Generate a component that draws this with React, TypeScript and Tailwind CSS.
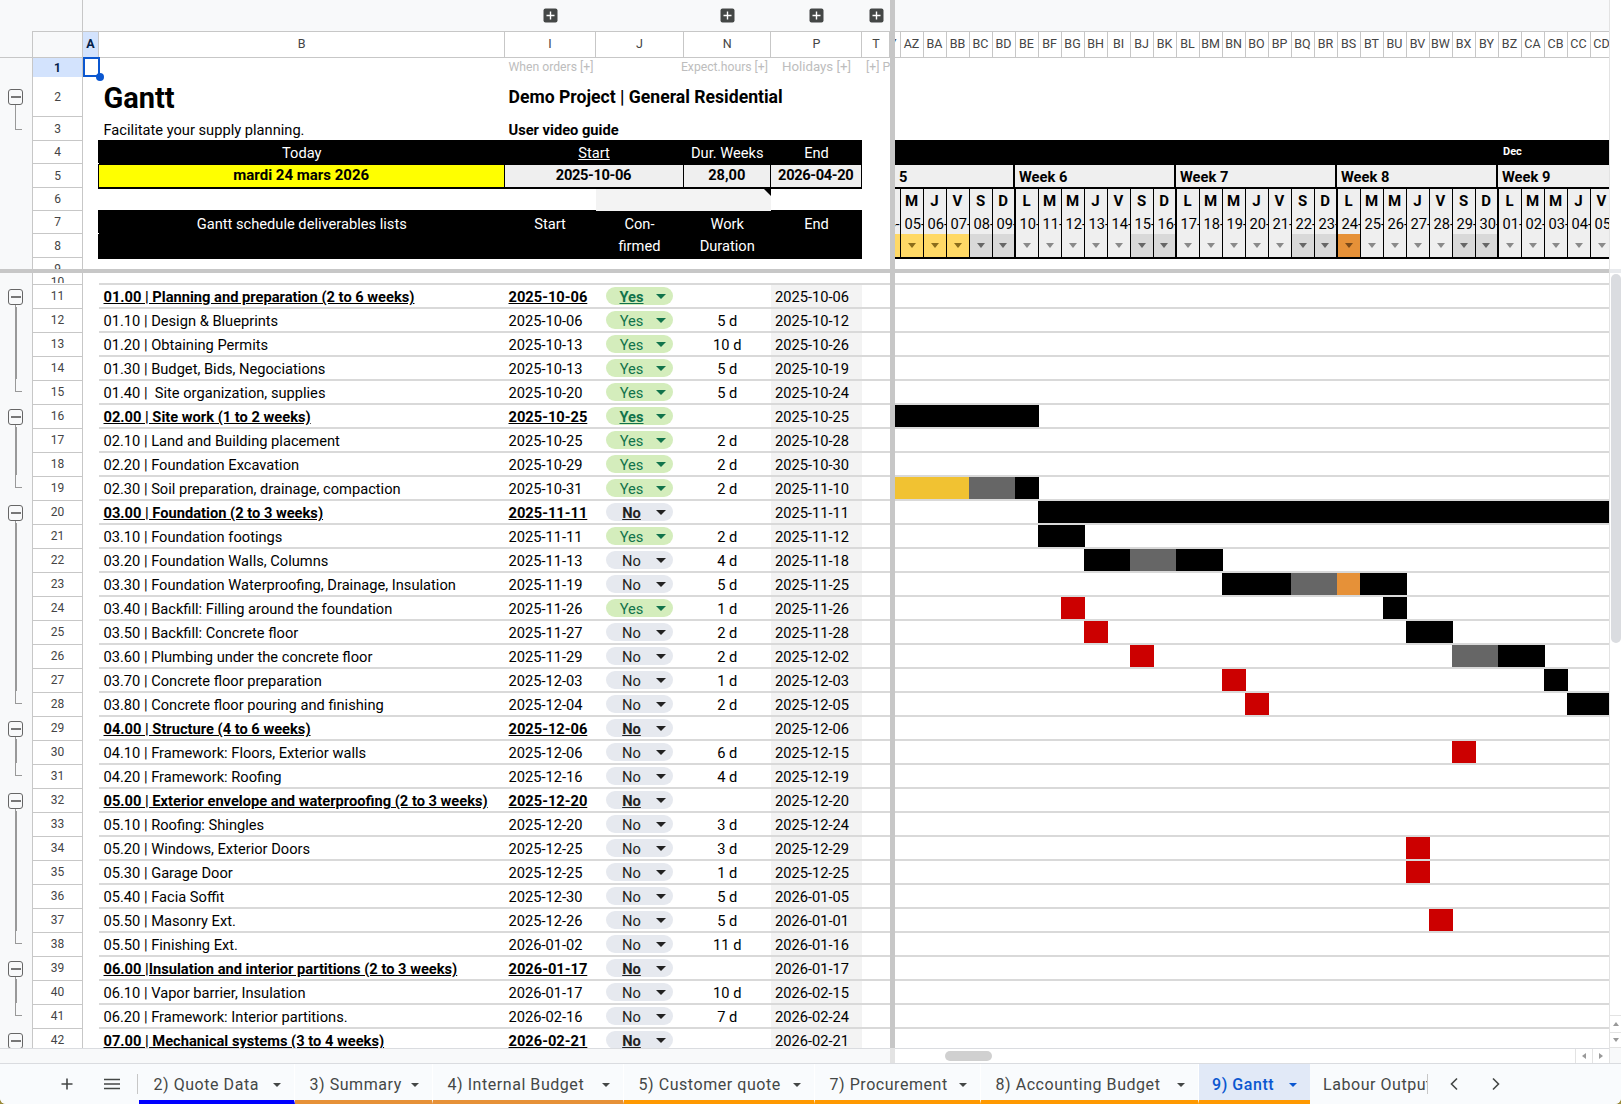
import React from "react";

type Row = { n: number; t: string; s: string; c: "Yes" | "No"; d: string; e: string; h?: boolean };

const rows: Row[] = [
  { n: 11, h: true, t: "01.00 | Planning and preparation (2 to 6 weeks)", s: "2025-10-06", c: "Yes", d: "", e: "2025-10-06" },
  { n: 12, t: "01.10 | Design & Blueprints", s: "2025-10-06", c: "Yes", d: "5 d", e: "2025-10-12" },
  { n: 13, t: "01.20 | Obtaining Permits", s: "2025-10-13", c: "Yes", d: "10 d", e: "2025-10-26" },
  { n: 14, t: "01.30 | Budget, Bids, Negociations", s: "2025-10-13", c: "Yes", d: "5 d", e: "2025-10-19" },
  { n: 15, t: "01.40 |  Site organization, supplies", s: "2025-10-20", c: "Yes", d: "5 d", e: "2025-10-24" },
  { n: 16, h: true, t: "02.00 | Site work (1 to 2 weeks)", s: "2025-10-25", c: "Yes", d: "", e: "2025-10-25" },
  { n: 17, t: "02.10 | Land and Building placement", s: "2025-10-25", c: "Yes", d: "2 d", e: "2025-10-28" },
  { n: 18, t: "02.20 | Foundation Excavation", s: "2025-10-29", c: "Yes", d: "2 d", e: "2025-10-30" },
  { n: 19, t: "02.30 | Soil preparation, drainage, compaction", s: "2025-10-31", c: "Yes", d: "2 d", e: "2025-11-10" },
  { n: 20, h: true, t: "03.00 | Foundation (2 to 3 weeks)", s: "2025-11-11", c: "No", d: "", e: "2025-11-11" },
  { n: 21, t: "03.10 | Foundation footings", s: "2025-11-11", c: "Yes", d: "2 d", e: "2025-11-12" },
  { n: 22, t: "03.20 | Foundation Walls, Columns", s: "2025-11-13", c: "No", d: "4 d", e: "2025-11-18" },
  { n: 23, t: "03.30 | Foundation Waterproofing, Drainage, Insulation", s: "2025-11-19", c: "No", d: "5 d", e: "2025-11-25" },
  { n: 24, t: "03.40 | Backfill: Filling around the foundation", s: "2025-11-26", c: "Yes", d: "1 d", e: "2025-11-26" },
  { n: 25, t: "03.50 | Backfill: Concrete floor", s: "2025-11-27", c: "No", d: "2 d", e: "2025-11-28" },
  { n: 26, t: "03.60 | Plumbing under the concrete floor", s: "2025-11-29", c: "No", d: "2 d", e: "2025-12-02" },
  { n: 27, t: "03.70 | Concrete floor preparation", s: "2025-12-03", c: "No", d: "1 d", e: "2025-12-03" },
  { n: 28, t: "03.80 | Concrete floor pouring and finishing", s: "2025-12-04", c: "No", d: "2 d", e: "2025-12-05" },
  { n: 29, h: true, t: "04.00 | Structure (4 to 6 weeks)", s: "2025-12-06", c: "No", d: "", e: "2025-12-06" },
  { n: 30, t: "04.10 | Framework: Floors, Exterior walls", s: "2025-12-06", c: "No", d: "6 d", e: "2025-12-15" },
  { n: 31, t: "04.20 | Framework: Roofing", s: "2025-12-16", c: "No", d: "4 d", e: "2025-12-19" },
  { n: 32, h: true, t: "05.00 | Exterior envelope and waterproofing (2 to 3 weeks)", s: "2025-12-20", c: "No", d: "", e: "2025-12-20" },
  { n: 33, t: "05.10 | Roofing: Shingles", s: "2025-12-20", c: "No", d: "3 d", e: "2025-12-24" },
  { n: 34, t: "05.20 | Windows, Exterior Doors", s: "2025-12-25", c: "No", d: "3 d", e: "2025-12-29" },
  { n: 35, t: "05.30 | Garage Door", s: "2025-12-25", c: "No", d: "1 d", e: "2025-12-25" },
  { n: 36, t: "05.40 | Facia Soffit", s: "2025-12-30", c: "No", d: "5 d", e: "2026-01-05" },
  { n: 37, t: "05.50 | Masonry Ext.", s: "2025-12-26", c: "No", d: "5 d", e: "2026-01-01" },
  { n: 38, t: "05.50 | Finishing Ext.", s: "2026-01-02", c: "No", d: "11 d", e: "2026-01-16" },
  { n: 39, h: true, t: "06.00 |Insulation and interior partitions (2 to 3 weeks)", s: "2026-01-17", c: "No", d: "", e: "2026-01-17" },
  { n: 40, t: "06.10 | Vapor barrier, Insulation", s: "2026-01-17", c: "No", d: "10 d", e: "2026-02-15" },
  { n: 41, t: "06.20 | Framework: Interior partitions.", s: "2026-02-16", c: "No", d: "7 d", e: "2026-02-24" },
  { n: 42, h: true, t: "07.00 | Mechanical systems (3 to 4 weeks)", s: "2026-02-21", c: "No", d: "", e: "2026-02-21" },
];

const K = "#000000";
const G = "#666666";
const R = "#cc0000";
const Y = "#f1c232";
const O = "#e69138";
// [start x, end x, colour] in page pixels
const bars: Record<number, [number, number, string][]> = {
  16: [[895, 1039, K]],
  19: [[895, 969, Y], [969, 1015, G], [1015, 1039, K]],
  20: [[1038, 1609, K]],
  21: [[1038, 1085, K]],
  22: [[1084, 1130, K], [1130, 1176, G], [1176, 1223, K]],
  23: [[1222, 1291, K], [1291, 1337, G], [1337, 1360, O], [1360, 1407, K]],
  24: [[1061, 1085, R], [1383, 1407, K]],
  25: [[1084, 1108, R], [1406, 1453, K]],
  26: [[1130, 1154, R], [1452, 1498, G], [1498, 1545, K]],
  27: [[1222, 1246, R], [1544, 1568, K]],
  28: [[1245, 1269, R], [1567, 1609, K]],
  30: [[1452, 1476, R]],
  34: [[1406, 1430, R]],
  35: [[1406, 1430, R]],
  37: [[1429, 1453, R]],
};

const colLabels = ["AZ","BA","BB","BC","BD","BE","BF","BG","BH","BI","BJ","BK","BL","BM","BN","BO","BP","BQ","BR","BS","BT","BU","BV","BW","BX","BY","BZ","CA","CB","CC","CD"];
const days = ["M","J","V","S","D","L","M","M","J","V","S","D","L","M","M","J","V","S","D","L","M","M","J","V","S","D","L","M","M","J","V"];
const dates = ["05","06","07","08","09","10","11","12","13","14","15","16","17","18","19","20","21","22","23","24","25","26","27","28","29","30","01","02","03","04","05"];

const groupStart = new Set([2, 11, 16, 20, 29, 32, 39, 42]);
const groupEnd = new Set([3, 15, 19, 28, 31, 38, 41]);
const groupMid = new Set([12, 13, 14, 17, 18, 21, 22, 23, 24, 25, 26, 27, 30, 33, 34, 35, 36, 37, 40]);

function Outline({ n }: { n: number }) {
  let inner: React.ReactNode = null;
  if (groupStart.has(n)) {
    inner = (
      <div className={`ml-[8px] flex h-full w-[15px] flex-col items-center ${n === 2 ? "pt-[12px]" : "pt-[6px]"}`}>
        <div className="flex h-[16px] w-[15px] shrink-0 items-center justify-center rounded-[3px] border border-[#666666] bg-[#f8f9fa]">
          <div className="h-[1.5px] w-[10px] bg-[#777777]" />
        </div>
        <div className="w-[1.5px] flex-1 bg-[#999999]" />
      </div>
    );
  } else if (groupEnd.has(n)) {
    inner = <div className="ml-[15px] h-[56%] w-[7px] border-b-[1.5px] border-l-[1.5px] border-[#999999]" />;
  } else if (groupMid.has(n)) {
    inner = <div className="ml-[15px] h-full w-[1.5px] bg-[#999999]" />;
  }
  return <div className="h-full w-[32px] shrink-0 bg-[#f8f9fa]">{inner}</div>;
}

function RowHead({ n }: { n: number }) {
  return (
    <div className="h-full w-[51px] shrink-0 border-l border-r border-[#c7c7c7] bg-white">
      <div className="flex h-full items-center justify-center overflow-hidden border-b border-[#c7c7c7] text-[12px] leading-none text-[#444444]">{n}</div>
    </div>
  );
}

function Tri({ cls }: { cls: string }) {
  return <div className={`h-0 w-0 border-x-[5px] border-t-[5px] border-x-transparent ${cls}`} />;
}

function TabTri({ cls }: { cls: string }) {
  return <div className={`h-0 w-0 border-x-[4px] border-t-[4px] border-x-transparent ${cls}`} />;
}

function Plus() {
  return (
    <svg width="15" height="15" viewBox="0 0 15 15">
      <rect x="0.5" y="0.5" width="14" height="14" rx="2" fill="#444746" />
      <path d="M7.5 3.5v8M3.5 7.5h8" stroke="#ffffff" strokeWidth="1.4" fill="none" />
    </svg>
  );
}

function DataRowLeft({ r }: { r: Row }) {
  const yes = r.c === "Yes";
  const style = r.h ? "font-bold underline" : "";
  return (
    <div className="flex h-[24px] shrink-0">
      <Outline n={r.n} />
      <div className="h-full w-[51px] shrink-0 border-l border-r border-[#c7c7c7] bg-white pt-px">
        <div className="flex h-full items-center justify-center border-t border-[#c7c7c7] pb-px text-[12px] leading-none text-[#444444]">{r.n}</div>
      </div>
      <div className="h-full w-[16px] shrink-0 bg-white" />
      <div className="flex h-full w-[791px] shrink-0 border-t-2 border-[#d9d9d9] text-[14.67px] leading-none text-black">
        <div className={`flex w-[405.5px] items-center overflow-hidden pl-[4.5px] pt-[3px] whitespace-pre ${style}`}>{r.t}</div>
        <div className={`flex w-[91px] items-center pl-[4px] pt-[3px] ${style}`}>{r.s}</div>
        <div className="flex w-[88px] items-center pl-[10.5px]">
          <div className={`flex h-[18px] w-[67px] items-center rounded-full pr-[7px] ${yes ? "bg-[#d4edbc] text-[#11734b]" : "bg-[#e6e9ef] text-[#222222]"} ${style}`}>
            <span className="flex-1 pl-[1px] pt-[3px] text-center">{r.c}</span>
            <Tri cls={yes ? "border-t-[#11734b]" : "border-t-[#222222]"} />
          </div>
        </div>
        <div className="flex w-[87.5px] items-center justify-center pt-[3px]">{r.d}</div>
        <div className="flex w-[91px] items-center bg-[#f3f3f3] pl-[4px] pt-[3px]">{r.e}</div>
        <div className="w-[28px]" />
      </div>
    </div>
  );
}

function DataRowRight({ r }: { r: Row }) {
  let x = 895;
  return (
    <div className="flex h-[24px] shrink-0 border-t-2 border-[#d9d9d9] bg-white">
      {(bars[r.n] || []).map(([a, b, c], i) => {
        const start = Math.max(a, x);
        const margin = start - x;
        x = b;
        return <div key={i} className="h-full shrink-0" style={{ marginLeft: margin, width: b - start, backgroundColor: c }} />;
      })}
    </div>
  );
}

const tabs: { t: string; w: string; b: string }[] = [
  { t: "2) Quote Data", w: "w-[156px]", b: "border-b-[#0000ff]" },
  { t: "3) Summary", w: "w-[138px]", b: "border-b-[#e69138]" },
  { t: "4) Internal Budget", w: "w-[191px]", b: "border-b-[#e69138]" },
  { t: "5) Customer quote", w: "w-[191px]", b: "border-b-[#ff9900]" },
  { t: "7) Procurement", w: "w-[166px]", b: "border-b-[#ff9900]" },
  { t: "8) Accounting Budget", w: "w-[218px]", b: "border-b-[#ff9900]" },
];

export default function App() {
  return (
    <div className="h-[1104px] w-[1621px] overflow-hidden bg-[#9a8a3a]">
      <div className="flex h-[1104px] w-[1621px] flex-col overflow-hidden rounded-b-[6px] bg-white font-['Roboto',sans-serif]">
        <div className="flex h-[1063px] shrink-0">
          {/* Frozen pane */}
          <div className="flex w-[890px] shrink-0 flex-col">
            <div className="flex h-[1048px] shrink-0 flex-col overflow-hidden">
              {/* Group toggle bar */}
              <div className="flex h-[31px] shrink-0 bg-[#f8f9fa]">
                <div className="w-[83px] shrink-0 border-r border-[#c7c7c7]" />
                <div className="w-[421.5px]" />
                <div className="flex w-[91px] items-center justify-center"><Plus /></div>
                <div className="w-[88px]" />
                <div className="flex w-[87.5px] items-center justify-center"><Plus /></div>
                <div className="flex w-[91px] items-center justify-center"><Plus /></div>
                <div className="flex w-[28px] items-center justify-center"><Plus /></div>
              </div>
              {/* Column letters */}
              <div className="flex h-[27px] shrink-0 border-b border-[#c7c7c7] bg-[#f8f9fa] text-[12.5px] text-[#444444]">
                <div className="w-[32px] shrink-0" />
                <div className="h-full w-[51px] shrink-0 border-l border-r border-t border-[#c7c7c7]" />
                <div className="flex w-[16px] items-center justify-center border-t border-r border-[#c7c7c7] bg-[#d3e3fd] font-bold text-[#041e49]">A</div>
                {[["B", "w-[405.5px]"], ["I", "w-[91px]"], ["J", "w-[88px]"], ["N", "w-[87.5px]"], ["P", "w-[91px]"], ["T", "w-[28px]"]].map(([l, w]) => (
                  <div key={l} className={`flex items-center justify-center border-t border-r border-[#c7c7c7] bg-white pl-px ${w}`}>{l}</div>
                ))}
              </div>
              {/* Row 1 */}
              <div className="flex h-[19px] shrink-0">
                <Outline n={1} />
                <div className="flex h-full w-[51px] shrink-0 items-center justify-center border-l border-r border-[#c7c7c7] bg-[#d3e3fd] text-[12px] font-bold text-[#041e49]">1</div>
                <div className="relative -mt-px h-[20px] w-[17px] shrink-0 border-2 border-[#0b57d0]">
                  <div className="absolute -bottom-[6px] -right-[6px] h-[8px] w-[8px] rounded-full bg-[#0b57d0]" />
                </div>
                <div className="flex h-full -ml-px text-[12.2px] leading-[18px] text-[#bdbdbd]">
                  <div className="w-[405.5px]" />
                  <div className="w-[91px] pl-[4px] whitespace-nowrap">When orders [+]</div>
                  <div className="w-[88px]" />
                  <div className="flex w-[87.5px] justify-end pr-[3px] whitespace-nowrap">Expect.hours [+]</div>
                  <div className="w-[91px] text-center text-[13.3px] whitespace-nowrap">Holidays [+]</div>
                  <div className="w-[28px] overflow-hidden pl-[4px] whitespace-nowrap">[+] Phase</div>
                </div>
              </div>
              {/* Row 2 */}
              <div className="flex h-[40px] shrink-0">
                <Outline n={2} />
                <RowHead n={2} />
                <div className="w-[16px] shrink-0" />
                <div className="flex w-[405.5px] items-center pl-[4.5px] pt-[3px] text-[29px] font-bold leading-none text-black">Gantt</div>
                <div className="flex items-center pl-[4px] pt-[2px] text-[17.6px] font-bold leading-none text-black whitespace-nowrap">Demo Project | General Residential</div>
              </div>
              {/* Row 3 */}
              <div className="flex h-[24px] shrink-0">
                <Outline n={3} />
                <RowHead n={3} />
                <div className="w-[16px] shrink-0" />
                <div className="flex w-[405.5px] items-center pl-[4.5px] pt-[3px] text-[14.67px] leading-none text-black">Facilitate your supply planning.</div>
                <div className="flex items-center pl-[4px] pt-[3px] text-[14.67px] font-bold leading-none text-black">User video guide</div>
              </div>
              {/* Row 4 */}
              <div className="flex h-[23px] shrink-0">
                <Outline n={4} />
                <RowHead n={4} />
                <div className="w-[16px] shrink-0" />
                <div className="flex w-[763px] bg-black pt-[2px] text-[14.67px] leading-none text-white shadow-[-1px_-1px_0_#000,0_-1px_0_#000,0_1px_0_#000]">
                  <div className="flex w-[405.5px] items-center justify-center">Today</div>
                  <div className="flex w-[179px] items-center justify-center underline">Start</div>
                  <div className="flex w-[87.5px] items-center justify-center whitespace-nowrap">Dur. Weeks</div>
                  <div className="flex w-[91px] items-center justify-center">End</div>
                </div>
              </div>
              {/* Row 5 */}
              <div className="flex h-[24px] shrink-0">
                <Outline n={5} />
                <RowHead n={5} />
                <div className="w-[16px] shrink-0" />
                <div className="flex h-[25px] w-[763px] gap-px bg-black pt-px pb-[2px] pr-[1.5px] text-[14.67px] font-bold leading-none text-black shadow-[-1px_0_0_#000]">
                  <div className="flex w-[404.5px] items-center justify-center bg-[#ffff00] pb-[2px] text-[15px]">mardi 24 mars 2026</div>
                  <div className="flex w-[178px] items-center justify-center bg-[#efefef] pb-[2px] tracking-[-0.35px]">2025-10-06</div>
                  <div className="flex w-[86.5px] items-center justify-center bg-[#efefef] pb-[2px]">28,00</div>
                  <div className="flex flex-1 items-center justify-center bg-[#efefef] pb-[2px] tracking-[-0.35px]">2026-04-20</div>
                </div>
              </div>
              {/* Row 6 */}
              <div className="flex h-[23px] shrink-0">
                <Outline n={6} />
                <RowHead n={6} />
                <div className="w-[16px] shrink-0" />
                <div className="w-[496.5px]" />
                <div className="relative mt-px h-[22px] w-[175.5px] bg-[#f3f3f3]">
                  <div className="absolute right-0 top-0 h-0 w-0 border-l-[7px] border-t-[7px] border-l-transparent border-t-black" />
                </div>
              </div>
              {/* Row 7 */}
              <div className="flex h-[23px] shrink-0">
                <Outline n={7} />
                <RowHead n={7} />
                <div className="w-[16px] shrink-0" />
                <div className="flex w-[763px] bg-black pt-[3px] text-[14.67px] leading-none text-white shadow-[-1px_-1px_0_#000,0_-1px_0_#000]">
                  <div className="flex w-[405.5px] items-center justify-center">Gantt schedule deliverables lists</div>
                  <div className="flex w-[91px] items-center justify-center">Start</div>
                  <div className="flex w-[88px] items-center justify-center">Con-</div>
                  <div className="flex w-[87.5px] items-center justify-center">Work</div>
                  <div className="flex w-[91px] items-center justify-center">End</div>
                </div>
              </div>
              {/* Row 8 */}
              <div className="flex h-[24px] shrink-0">
                <Outline n={8} />
                <RowHead n={8} />
                <div className="w-[16px] shrink-0" />
                <div className="flex h-[24.5px] w-[763px] bg-black pt-px text-[14.67px] leading-none text-white shadow-[-1px_0_0_#000]">
                  <div className="w-[405.5px]" />
                  <div className="w-[91px]" />
                  <div className="flex w-[88px] items-center justify-center">firmed</div>
                  <div className="flex w-[87.5px] items-center justify-center">Duration</div>
                  <div className="w-[91px]" />
                </div>
              </div>
              {/* Row 9 */}
              <div className="flex h-[11px] shrink-0">
                <Outline n={9} />
                <div className="h-full w-[51px] shrink-0 overflow-hidden border-l border-r border-[#c7c7c7] bg-white pt-[4px] text-center text-[12px] leading-[14px] text-[#444444]">9</div>
              </div>
              {/* Freeze bar */}
              <div className="h-[4px] shrink-0 bg-[#c7c7c7]" />
              {/* Row 10 */}
              <div className="flex h-[10px] shrink-0">
                <Outline n={10} />
                <div className="flex h-full w-[51px] shrink-0 items-start justify-center overflow-hidden border-l border-r border-[#c7c7c7] bg-white pt-[2px] text-[12px] leading-[14px] text-[#444444]">10</div>
              </div>
              {rows.map((r) => (
                <DataRowLeft key={r.n} r={r} />
              ))}
            </div>
            {/* Horizontal scroller, frozen side */}
            <div className="h-[15px] shrink-0 border-t border-[#dadce0] bg-[#f8f9fa]" />
          </div>

          {/* Vertical freeze bar */}
          <div className="flex w-[5px] shrink-0 flex-col">
            <div className="h-[1048px] shrink-0 bg-[#c7c7c7]" />
            <div className="flex-1 bg-[#e3e3e3]" />
          </div>

          {/* Scrolling pane */}
          <div className="flex w-[714px] shrink-0 flex-col">
            <div className="flex h-[1048px] shrink-0 flex-col overflow-hidden">
              <div className="h-[31px] shrink-0 bg-[#f8f9fa]" />
              <div className="flex h-[27px] shrink-0 overflow-hidden border-y border-[#c7c7c7] text-[12.5px] text-[#444444]">
                <div className="flex w-[5.5px] shrink-0 items-center justify-end overflow-hidden border-r border-[#c7c7c7] pr-[3px]">Y</div>
                {colLabels.map((c) => (
                  <div key={c} className="flex w-[23px] shrink-0 items-center justify-center border-r border-[#c7c7c7]">{c}</div>
                ))}
              </div>
              <div className="h-[82px] shrink-0" />
              {/* Month band */}
              <div className="flex h-[25px] shrink-0 bg-black">
                <div className="w-[608px] shrink-0" />
                <div className="w-[23px] overflow-hidden text-[11px] font-bold leading-[23px] text-white">Dec</div>
              </div>
              {/* Week band */}
              <div className="flex h-[24px] shrink-0 border-b-2 border-black bg-[#efefef] text-[14.67px] font-bold leading-[24px] text-black">
                <div className="w-[120px] shrink-0 border-r-2 border-black pl-[4px]">5</div>
                <div className="w-[161px] shrink-0 border-r-2 border-black pl-[4px]">Week 6</div>
                <div className="w-[161px] shrink-0 border-r-2 border-black pl-[4px]">Week 7</div>
                <div className="w-[161px] shrink-0 border-r-2 border-black pl-[4px]">Week 8</div>
                <div className="shrink-0 pl-[4px]">Week 9</div>
              </div>
              {/* Day columns */}
              <div className="flex h-[70px] shrink-0 border-b-2 border-black bg-[#efefef]">
                <div className="flex w-[5.5px] shrink-0 flex-col border-r border-black">
                  <div className="h-[23px] shrink-0" />
                  <div className="flex h-[22px] shrink-0 items-center justify-end overflow-hidden pt-[2px] text-[14.67px] leading-none">4-</div>
                  <div className="flex-1 bg-[#ffd966]" />
                </div>
                {days.map((d, i) => {
                  const weekend = d === "S" || d === "D";
                  const today = i === 19;
                  const past = i < 3;
                  return (
                    <div key={i} className={`flex w-[23px] shrink-0 flex-col border-black ${d === "D" ? "border-r-2" : "border-r"}`}>
                      <div className="flex h-[23px] shrink-0 items-center justify-center pt-[2px] text-[15px] font-bold leading-none text-black">{d}</div>
                      <div className="flex h-[22px] shrink-0 items-center overflow-hidden pl-[4px] pt-[2px] text-[14.67px] leading-none text-black whitespace-nowrap">{dates[i]}-11</div>
                      <div className={`flex flex-1 items-center justify-center ${today ? "bg-[#e69138]" : past ? "bg-[#ffd966]" : weekend ? "bg-[#d9d9d9]" : ""}`}>
                        <div className={`h-0 w-0 border-x-[4px] border-t-[5px] border-x-transparent ${today ? "border-t-[#7a4a1a]" : past ? "border-t-[#8a6d1b]" : weekend ? "border-t-[#666666]" : "border-t-[#8a8a8a]"}`} />
                      </div>
                    </div>
                  );
                })}
              </div>
              <div className="h-[10px] shrink-0" />
              <div className="h-[4px] shrink-0 bg-[#c7c7c7]" />
              <div className="h-[10px] shrink-0" />
              {rows.map((r) => (
                <DataRowRight key={r.n} r={r} />
              ))}
            </div>
            {/* Horizontal scroller */}
            <div className="flex h-[15px] shrink-0 items-center border-t border-[#dadce0] bg-white pl-[50px]">
              <div className="h-[10px] w-[47px] rounded-full bg-[#d0d0d0]" />
              <div className="ml-auto flex h-full">
                <div className="flex w-[17px] items-center justify-center border-l border-[#e3e3e3]">
                  <div className="h-0 w-0 border-y-[3px] border-r-[4px] border-y-transparent border-r-[#999999]" />
                </div>
                <div className="flex w-[17px] items-center justify-center border-l border-[#e3e3e3]">
                  <div className="h-0 w-0 border-y-[3px] border-l-[4px] border-y-transparent border-l-[#999999]" />
                </div>
              </div>
            </div>
          </div>

          {/* Vertical scrollbar */}
          <div className="flex w-[12px] shrink-0 flex-col border-l border-[#e3e3e3] bg-white">
            <div className="h-[269px] shrink-0" />
            <div className="h-[4px] shrink-0 bg-[#e8eaed]" />
            <div className="h-px shrink-0" />
            <div className="h-[369px] w-[10px] shrink-0 self-end rounded-full bg-[#dadce0]" />
            <div className="flex-1" />
            <div className="flex h-[17px] shrink-0 items-center justify-center border-t border-[#e3e3e3]">
              <div className="h-0 w-0 border-x-[3px] border-b-[4px] border-x-transparent border-b-[#999999]" />
            </div>
            <div className="flex h-[16px] shrink-0 items-center justify-center border-t border-b border-[#e3e3e3]">
              <div className="h-0 w-0 border-x-[3px] border-t-[4px] border-x-transparent border-t-[#999999]" />
            </div>
            <div className="h-[15px] shrink-0 bg-[#f8f9fa]" />
          </div>
        </div>

        {/* Sheet tabs */}
        <div className="flex h-[41px] shrink-0 border-t border-[#dadce0] bg-[#f9fbfd] text-[16px] tracking-[0.55px] text-[#444746]">
          <div className="flex w-[137px] shrink-0 items-center">
            <svg className="ml-[60px]" width="14" height="14" viewBox="0 0 14 14"><path d="M7 1.5v11M1.5 7h11" stroke="#444746" strokeWidth="1.6" fill="none" /></svg>
            <svg className="ml-[30px]" width="16" height="14" viewBox="0 0 16 14"><path d="M0 2.5h16M0 7h16M0 11.5h16" stroke="#444746" strokeWidth="1.6" fill="none" /></svg>
          </div>
          <div className="my-[10px] mr-[1px] w-px shrink-0 bg-[#c7c7c7]" />
          {tabs.map((x) => (
            <div key={x.t} className={`flex shrink-0 items-center justify-between border-b-4 border-r border-r-white pl-[14.5px] pr-[13px] pt-[6px] whitespace-nowrap ${x.w} ${x.b}`}>
              <span>{x.t}</span>
              <TabTri cls="border-t-[#444746]" />
            </div>
          ))}
          <div className="flex w-[111px] shrink-0 items-center justify-between border-b-4 border-[#ff9900] bg-[#e1e9f7] pl-[13px] pr-[13px] pt-[6px] font-medium text-[#0b57d0]">
            <span>9) Gantt</span>
            <TabTri cls="border-t-[#0b57d0]" />
          </div>
          <div className="flex w-[117px] shrink-0 items-center overflow-hidden pl-[13px] pt-[2px] whitespace-nowrap">Labour Output</div>
          <div className="my-[10px] w-px shrink-0 bg-[#c7c7c7]" />
          <svg className="ml-[21px] self-center" width="10" height="14" viewBox="0 0 10 14"><path d="M8 1.5 2.5 7 8 12.5" stroke="#444746" strokeWidth="1.6" fill="none" /></svg>
          <svg className="ml-[32px] self-center" width="10" height="14" viewBox="0 0 10 14"><path d="M2 1.5 7.5 7 2 12.5" stroke="#444746" strokeWidth="1.6" fill="none" /></svg>
        </div>
      </div>
    </div>
  );
}
